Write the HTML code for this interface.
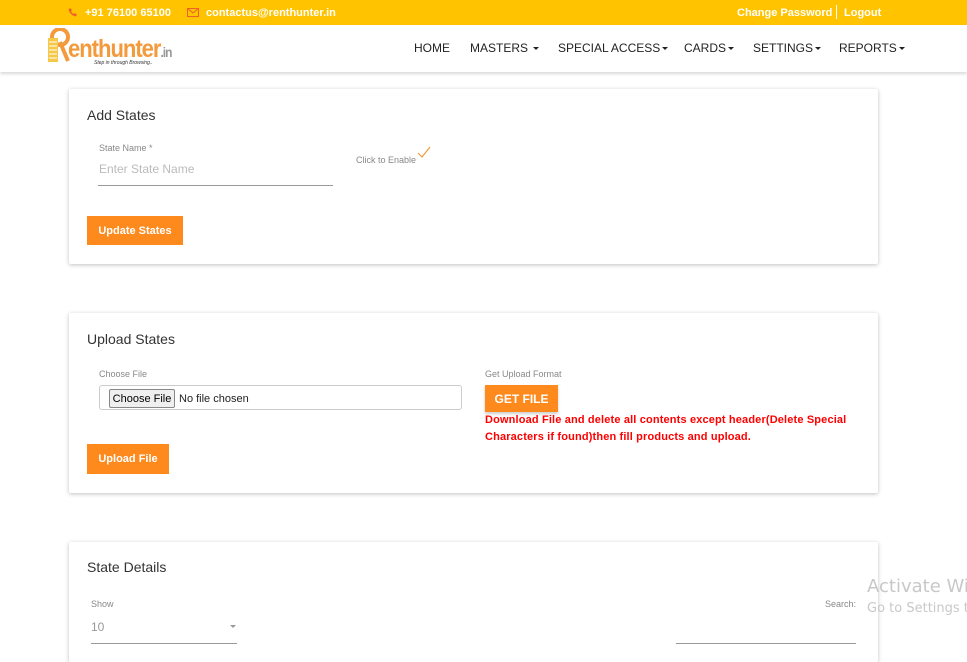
<!DOCTYPE html>
<html><head><meta charset="utf-8"><style>
*{box-sizing:border-box;margin:0;padding:0}
body{width:967px;height:647px;overflow:hidden;background:#fff;font-family:"Liberation Sans",Arial,sans-serif;position:relative}
.abs{position:absolute}
.top{left:0;top:0;width:967px;height:25px;background:#ffc300;color:#fff;font-size:11px;font-weight:bold}
.nav{left:0;top:25px;width:967px;height:47px;background:#fff;box-shadow:0 2px 3px rgba(0,0,0,.15)}
.nav span{position:absolute;top:16px;font-size:12px;color:#222}
.card{background:#fff;left:69px;width:809px;box-shadow:0 1px 4px rgba(0,0,0,.25);border-radius:2px}
.h{font-size:14px;color:#333}
.lbl{font-size:9px;color:#888}
.btn{background:#fe8a1e;color:#fff;font-weight:bold;font-size:11px;display:flex;align-items:center;justify-content:center}
.car{display:inline-block;border-left:3px solid transparent;border-right:3px solid transparent;border-top:3px solid #222;vertical-align:middle;margin-left:2px}
</style></head><body>
<div class="abs top">
<svg class="abs" style="left:68px;top:7px" width="10" height="10" viewBox="0 0 10 10"><path d="M2 1 L4 3 L3 4.5 Q4.5 6.5 5.5 7 L7 6 L9 8 L7.5 9.5 Q2 8 0.5 2.5Z" fill="#f0602a"/></svg>
<span class="abs" style="left:85px;top:7px">+91 76100 65100</span>
<svg class="abs" style="left:187px;top:8px" width="12" height="9" viewBox="0 0 12 9"><rect x=".5" y=".5" width="11" height="8" fill="none" stroke="#f0602a"/><path d="M.5 .5 L6 5 L11.5 .5" fill="none" stroke="#f0602a"/></svg>
<span class="abs" style="left:206px;top:7px">contactus@renthunter.in</span>
<span class="abs" style="left:737px;top:7px">Change Password</span>
<span class="abs" style="left:836px;top:5px;width:1px;height:14px;background:#fff"></span>
<span class="abs" style="left:844px;top:7px">Logout</span>
</div>
<div class="abs nav">
<svg class="abs" style="left:46px;top:3px" width="24" height="34" viewBox="0 0 24 34"><circle cx="14" cy="9" r="8" fill="none" stroke="#f39a3c" stroke-width="4"/><rect x="2" y="10" width="10" height="24" fill="#f5c84a"/><path d="M3 14h8M3 18h8M3 22h8M3 26h8M3 30h8" stroke="#fff" stroke-width="1"/><path d="M14 14 L22 33" stroke="#f39a3c" stroke-width="4"/></svg>
<span style="left:68px;top:9px;font-size:22px;color:#f39a3c;letter-spacing:-1px;font-weight:bold;transform:scaleY(1.15);transform-origin:top left">enthunter<span style="position:static;color:#999">.in</span></span>
<span style="left:94px;top:35px;font-size:5px;font-style:italic;color:#333">Step in through Browsing..</span>
<span style="left:414px">HOME</span>
<span style="left:470px">MASTERS <i class="car"></i></span>
<span style="left:558px">SPECIAL ACCESS<i class="car"></i></span>
<span style="left:684px">CARDS<i class="car"></i></span>
<span style="left:753px">SETTINGS<i class="car"></i></span>
<span style="left:839px">REPORTS<i class="car"></i></span>
</div>

<div class="abs card" style="top:89px;height:175px">
<div class="abs h" style="left:18px;top:18px">Add States</div>
<div class="abs lbl" style="left:30px;top:54px">State Name *</div>
<div class="abs" style="left:30px;top:73px;font-size:12px;color:#bbb">Enter State Name</div>
<div class="abs" style="left:29px;top:96px;width:235px;height:1px;background:#999"></div>
<div class="abs lbl" style="left:287px;top:66px">Click to Enable</div>
<svg class="abs" style="left:348px;top:57px" width="14" height="12" viewBox="0 0 14 12"><path d="M1 7 L5 11 L13 1" fill="none" stroke="#f39a3c" stroke-width="1.2"/></svg>
<div class="abs btn" style="left:18px;top:127px;width:96px;height:29px">Update States</div>
</div>

<div class="abs card" style="top:313px;height:180px">
<div class="abs h" style="left:18px;top:18px">Upload States</div>
<div class="abs lbl" style="left:30px;top:56px">Choose File</div>
<div class="abs" style="left:30px;top:72px;width:363px;height:25px;border:1px solid #ccc;border-radius:3px"></div>
<div class="abs" style="left:40px;top:76px;width:66px;height:19px;background:#efefef;border:1px solid #888;border-radius:2px;font-size:11px;display:flex;align-items:center;justify-content:center">Choose File</div>
<div class="abs" style="left:110px;top:80px;font-size:11px;color:#222">No file chosen</div>
<div class="abs lbl" style="left:416px;top:56px">Get Upload Format</div>
<div class="abs btn" style="left:416px;top:72px;width:73px;height:27px;font-size:12px;box-shadow:0 2px 3px rgba(0,0,0,.2)">GET FILE</div>
<div class="abs" style="left:416px;top:99px;font-size:11px;font-weight:bold;color:#f00;line-height:17px;width:390px;letter-spacing:0.15px">Download File and delete all contents except header(Delete Special Characters if found)then fill products and upload.</div>
<div class="abs btn" style="left:18px;top:131px;width:82px;height:30px">Upload File</div>
</div>

<div class="abs card" style="top:542px;height:120px">
<div class="abs h" style="left:18px;top:17px">State Details</div>
<div class="abs lbl" style="left:22px;top:57px">Show</div>
<div class="abs" style="left:22px;top:78px;font-size:12px;color:#999">10</div>
<div class="abs" style="left:161px;top:83px;border-left:3px solid transparent;border-right:3px solid transparent;border-top:3px solid #999"></div>
<div class="abs" style="left:22px;top:101px;width:146px;height:1px;background:#999"></div>
<div class="abs lbl" style="left:756px;top:57px">Search:</div>
<div class="abs" style="left:607px;top:101px;width:180px;height:1px;background:#999"></div>
</div>
<div class="abs" style="left:867px;top:576px;font-size:18px;color:#c8c8c8;white-space:nowrap;font-family:'DejaVu Sans',sans-serif">Activate Wi</div>
<div class="abs" style="left:867px;top:601px;font-size:13px;color:#c8c8c8;white-space:nowrap;font-family:'DejaVu Sans',sans-serif">Go to Settings t</div>
</body></html>
